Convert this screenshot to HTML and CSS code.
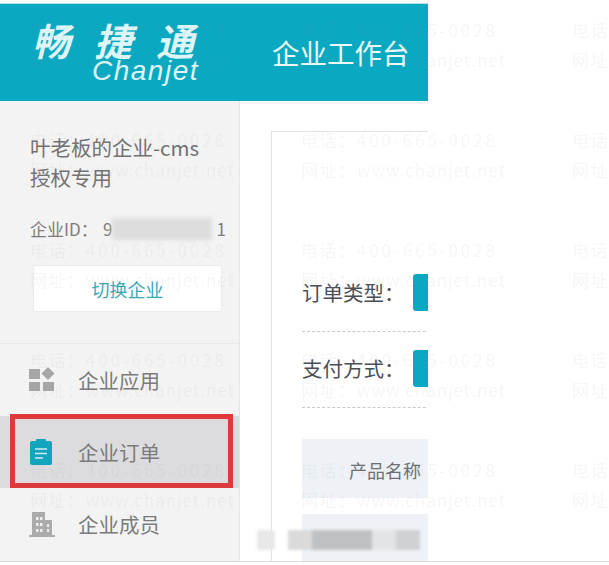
FILE: index.html
```html
<!DOCTYPE html>
<html lang="zh-CN">
<head>
<meta charset="utf-8">
<title>企业工作台</title>
<link rel="stylesheet" href="styles.css">
</head>
<body>
<div class="shot">
<div class="app">
  <header class="header">
    <div class="logo">
      <div class="logo-cn">畅捷通</div>
      <div class="logo-en">Chanjet</div>
    </div>
    <div class="header-title">企业工作台</div>
  </header>
  <div class="body">
    <aside class="sidebar">
      <div class="company">
        <div class="company-name">叶老板的企业-cms<br>授权专用</div>
        <div class="company-id"><span class="id-label">企业ID：</span>9<span class="blur-id"></span>1</div>
        <button class="switch">切换企业</button>
      </div>
      <nav class="nav">
        <div class="nav-item">
          <svg class="nav-icon" viewBox="0 0 26 26"><rect x="0" y="2" width="11" height="10" fill="#a6a6a6"/><path d="M19 0l6.500 6.500-6.500 6.500-6.500-6.500z" fill="#a6a6a6"/><rect x="0" y="15" width="11" height="9" fill="#a6a6a6"/><rect x="14" y="15" width="11" height="9" fill="#a6a6a6"/></svg>
          <span>企业应用</span>
        </div>
        <div class="nav-item active">
          <svg class="nav-icon" viewBox="0 0 26 26"><rect x="1" y="2" width="22" height="24" rx="2" fill="#12a5bd"/><rect x="7" y="0" width="10" height="5" rx="1" fill="#12a5bd"/><path d="M6 10h12M6 14.500h12M6 19h8" stroke="#cfeaf0" stroke-width="1.600"/></svg>
          <span>企业订单</span>
        </div>
        <div class="nav-item">
          <svg class="nav-icon" viewBox="0 0 26 26"><path d="M3 24V1h13v8h7v15h3v2H0v-2z" fill="#ababab"/><path d="M7 6h2.500v3H7zM11 6h2.500v3H11zM7 12h2.500v3H7zM11 12h2.500v3H11zM7 18h2.500v3H7zM11 18h2.500v3H11zM18 13h2v3h-2zM18 18h2v3h-2z" fill="#eee"/></svg>
          <span>企业成员</span>
        </div>
      </nav>
    </aside>
    <main class="main">
      <div class="panel">
        <div class="filter">
          <span class="filter-label">订单类型：</span><span class="chip"></span>
        </div>
        <div class="filter">
          <span class="filter-label">支付方式：</span><span class="chip"></span>
        </div>
        <div class="table-head"><span>产品名称</span></div>
        <div class="table-row"></div>
      </div>
    </main>
  </div>
</div>
</div>
<div class="blur-bar" aria-hidden="true"><i class="b1"></i><i class="b2"></i><i class="b3"></i><i class="b4"></i><i class="b5"></i></div>
<div class="highlight" aria-hidden="true"></div>
<div class="watermarks">
  <div class="mark"><p><span class="wl">电话：</span><span class="wd">400-665-0028</span></p><p><span class="wl">网址：</span><span class="wu">www.chanjet.net</span></p></div>
  <div class="mark"><p><span class="wl">电话：</span><span class="wd">400-665-0028</span></p><p><span class="wl">网址：</span><span class="wu">www.chanjet.net</span></p></div>
  <div class="mark"><p><span class="wl">电话：</span><span class="wd">400-665-0028</span></p><p><span class="wl">网址：</span><span class="wu">www.chanjet.net</span></p></div>
  <div class="mark"><p><span class="wl">电话：</span><span class="wd">400-665-0028</span></p><p><span class="wl">网址：</span><span class="wu">www.chanjet.net</span></p></div>
  <div class="mark"><p><span class="wl">电话：</span><span class="wd">400-665-0028</span></p><p><span class="wl">网址：</span><span class="wu">www.chanjet.net</span></p></div>
  <div class="mark"><p><span class="wl">电话：</span><span class="wd">400-665-0028</span></p><p><span class="wl">网址：</span><span class="wu">www.chanjet.net</span></p></div>
  <div class="mark"><p><span class="wl">电话：</span><span class="wd">400-665-0028</span></p><p><span class="wl">网址：</span><span class="wu">www.chanjet.net</span></p></div>
  <div class="mark"><p><span class="wl">电话：</span><span class="wd">400-665-0028</span></p><p><span class="wl">网址：</span><span class="wu">www.chanjet.net</span></p></div>
  <div class="mark"><p><span class="wl">电话：</span><span class="wd">400-665-0028</span></p><p><span class="wl">网址：</span><span class="wu">www.chanjet.net</span></p></div>
  <div class="mark"><p><span class="wl">电话：</span><span class="wd">400-665-0028</span></p><p><span class="wl">网址：</span><span class="wu">www.chanjet.net</span></p></div>
  <div class="mark"><p><span class="wl">电话：</span><span class="wd">400-665-0028</span></p><p><span class="wl">网址：</span><span class="wu">www.chanjet.net</span></p></div>
  <div class="mark"><p><span class="wl">电话：</span><span class="wd">400-665-0028</span></p><p><span class="wl">网址：</span><span class="wu">www.chanjet.net</span></p></div>
  <div class="mark"><p><span class="wl">电话：</span><span class="wd">400-665-0028</span></p><p><span class="wl">网址：</span><span class="wu">www.chanjet.net</span></p></div>
  <div class="mark"><p><span class="wl">电话：</span><span class="wd">400-665-0028</span></p><p><span class="wl">网址：</span><span class="wu">www.chanjet.net</span></p></div>
  <div class="mark"><p><span class="wl">电话：</span><span class="wd">400-665-0028</span></p><p><span class="wl">网址：</span><span class="wu">www.chanjet.net</span></p></div>
</div>
```
FILE: styles.css
```css
html, body {
  margin: 0;
  height: 565px;
  overflow: hidden;
  background: #fff;
  font-family: "Noto Sans CJK SC", "Liberation Sans", sans-serif;
}

.shot {
  height: 561px;
  border-bottom: 1px solid #dcdcdc;
}

.app {
  width: 428px;
  height: 561px;
  box-sizing: border-box;
  padding-top: 4px;
  display: flex;
  flex-direction: column;
  overflow: hidden;
}

.header {
  height: 97px;
  flex: none;
  display: flex;
  align-items: center;
  background: #0ba9c1;
  box-shadow: 0 -1px 0 #a8e3ea;
  color: #fff;
}

.logo {
  width: 240px;
  flex: none;
  padding-left: 32px;
  box-sizing: border-box;
  font-style: italic;
  color: #dff6f8;
}

.logo-cn {
  font-size: 38px;
  line-height: 40px;
  font-weight: 700;
  letter-spacing: 24px;
  white-space: nowrap;
}

.logo-en {
  margin-left: 60px;
  margin-top: -3px;
  font-family: "Liberation Sans", sans-serif;
  font-size: 28px;
  line-height: 28px;
  letter-spacing: 1.500px;
}

.header-title {
  margin-left: 32px;
  font-size: 27.500px;
  line-height: 34px;
  margin-top: -2px;
  white-space: nowrap;
  color: #eefbfc;
}

.body {
  flex: 1;
  display: flex;
  min-height: 0;
}

.sidebar {
  width: 240px;
  flex: none;
  box-sizing: border-box;
  background: #f3f3f3;
  border-right: 1px solid #e6e6e6;
  display: flex;
  flex-direction: column;
}

.company {
  height: 243px;
  flex: none;
  box-sizing: border-box;
  padding: 31px 0 0 30px;
  border-bottom: 1px solid #e9e9e9;
}

.company-name {
  font-size: 20.500px;
  line-height: 30px;
  color: #727272;
  white-space: nowrap;
}

.company-id {
  margin-top: 25px;
  font-size: 17px;
  line-height: 24px;
  color: #7d7d7d;
  white-space: nowrap;
  display: flex;
  align-items: center;
}

.id-label {
  width: 73px;
  flex: none;
}

.blur-id {
  width: 100px;
  height: 22px;
  background: #dddddd;
  filter: blur(2px);
  margin: 0 4px 0 0;
}

.switch {
  display: block;
  width: 189px;
  height: 47px;
  margin: 24px 0 0 3px;
  padding: 0;
  background: #fff;
  border: 1px solid #ececec;
  border-radius: 2px;
  color: #3ba7b8;
  font: inherit;
  font-size: 18px;
}

.nav {
  display: flex;
  flex-direction: column;
}

.nav-item {
  height: 72px;
  box-sizing: border-box;
  padding-left: 29px;
  display: flex;
  align-items: center;
  gap: 23px;
  font-size: 20.500px;
  color: #7b7b7b;
}

.nav-item.active {
  background: #dcdcdf;
}

.nav-icon {
  width: 26px;
  height: 26px;
  flex: none;
}

.main {
  flex: 1;
  min-width: 0;
  padding: 30px 0 0 31px;
  overflow: hidden;
}

.panel {
  width: 300px;
  height: 430px;
  box-sizing: border-box;
  padding-top: 142px;
  padding-left: 30px;
  border: 1px solid #e2e2e2;
  border-bottom: 0;
  border-right: 0;
}

.filter {
  width: 300px;
  height: 58px;
  margin-bottom: 18px;
  box-sizing: border-box;
  display: flex;
  align-items: flex-start;
  border-bottom: 1px dashed #c9c9c9;
}

.filter-label {
  width: 111px;
  flex: none;
  font-size: 20.500px;
  line-height: 37px;
  color: #4a4f55;
  white-space: nowrap;
}

.chip {
  width: 40px;
  height: 37px;
  background: #0ba9c1;
  border-radius: 3px;
}

.table-head {
  margin-top: 31px;
  width: 300px;
  height: 59px;
  background: #eef2f6;
  padding-left: 47px;
  box-sizing: border-box;
  font-size: 18px;
  line-height: 62px;
  color: #6c6f74;
  white-space: nowrap;
}

.table-row {
  margin-top: 16px;
  width: 300px;
  height: 48px;
  background: #eef2f6;
}

.highlight {
  position: absolute;
  left: 10px;
  top: 414px;
  width: 213px;
  height: 64px;
  border: 5px solid #dd3a3c;
  box-shadow: inset 0 0 1px #ff9a98;
}

.blur-bar {
  position: absolute;
  left: 257px;
  top: 530px;
  height: 20px;
  display: flex;
  align-items: stretch;
  filter: blur(1.500px);
}

.blur-bar .b1 {
  width: 18px;
  margin-right: 13px;
  background: #e8e8e8;
}

.blur-bar .b2 {
  width: 24px;
  background: #dadada;
}

.blur-bar .b3 {
  width: 60px;
  background: #c0c1c4;
}

.blur-bar .b4 {
  width: 24px;
  background: #e2e4e6;
}

.blur-bar .b5 {
  width: 24px;
  background: #cfd1d3;
}

.watermarks {
  position: absolute;
  left: 30px;
  top: 15px;
  width: 579px;
  height: 550px;
  overflow: hidden;
  display: grid;
  grid-template-columns: repeat(3, 271px);
  grid-auto-rows: 110px;
  pointer-events: none;
  color: rgba(120, 125, 130, 0.08);
  font-size: 17px;
  line-height: 30px;
  white-space: nowrap;
}

.watermarks p {
  margin: 0;
}

.wl {
  letter-spacing: 1.600px;
}

.wd {
  letter-spacing: 2.900px;
}

.wu {
  letter-spacing: 0.950px;
}
```
